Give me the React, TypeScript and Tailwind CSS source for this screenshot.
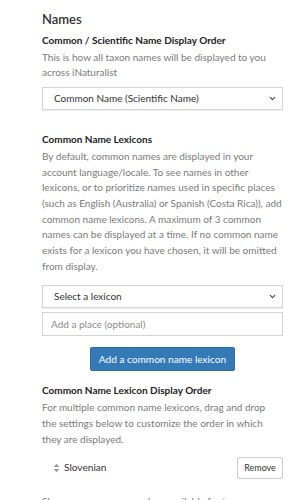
import { ChevronDown } from "lucide-react";

function FakeSelect({ label }: { label: string }) {
  return (
    <div className="flex h-[23px] items-center justify-between border border-[#d4d4d4] bg-white pl-[11px] pr-[5px] text-[10px] text-[#333] shadow-[0_1px_1px_rgba(0,0,0,0.06)]">
      <span>{label}</span>
      <ChevronDown className="h-[9px] w-[9px] text-[#444]" strokeWidth={3} />
    </div>
  );
}

function SortIcon() {
  return (
    <svg width="7" height="10" viewBox="0 0 7 10" className="text-[#9a9a9a]">
      <path d="M0.5 4 L3.5 0.8 L6.5 4 Z" fill="currentColor" />
      <path d="M0.5 6 L3.5 9.2 L6.5 6 Z" fill="currentColor" />
    </svg>
  );
}

export default function App() {
  return (
    <div className="min-h-[500px] w-[308px] bg-white pl-[42px] pr-[25px] pt-[9px] font-['Lato',sans-serif] text-[10px] leading-[15.7px] text-[#7a7a7a]">
      <h2 className="text-[13px] leading-[20px] font-semibold text-[#333]">Names</h2>

      {/* display order */}
      <h4 className="mt-[4px] font-bold text-[#222]">Common / Scientific Name Display Order</h4>
      <p className="mt-[1px]">This is how all taxon names will be displayed to you across iNaturalist</p>
      <div className="mt-[6px]">
        <FakeSelect label="Common Name (Scientific Name)" />
      </div>

      {/* lexicons */}
      <h4 className="mt-[22px] font-bold text-[#222]">Common Name Lexicons</h4>
      <p className="mt-[1px]">
        By default, common names are displayed in your account language/locale. To see names in other
        lexicons, or to prioritize names used in specific places (such as English (Australia) or Spanish
        (Costa Rica)), add common name lexicons. A maximum of 3 common names can be displayed at a time.
        If no common name exists for a lexicon you have chosen, it will be omitted from display.
      </p>
      <div className="mt-[11px]">
        <FakeSelect label="Select a lexicon" />
      </div>
      <input
        className="mt-[4px] block h-[24px] w-full border border-[#d4d4d4] px-[8px] text-[10px] text-[#333] placeholder:text-[#8a8a8a] outline-none"
        placeholder="Add a place (optional)"
      />
      <div className="mt-[11px] flex justify-center">
        <button className="h-[24px] w-[145px] rounded-[2px] border border-[#2e6da4] bg-[#337ab7] text-[10.1px] text-white">
          Add a common name lexicon
        </button>
      </div>

      {/* lexicon order */}
      <h4 className="mt-[12px] font-bold text-[#222]">Common Name Lexicon Display Order</h4>
      <p className="mt-[1px] pr-[6px]">
        For multiple common name lexicons, drag and drop the settings below to customize the order in
        which they are displayed.
      </p>
      <div className="mt-[10px] flex items-center justify-between">
        <div className="flex items-center gap-[4px] pl-[11px] text-[10.1px] text-[#333]">
          <SortIcon />
          <span>Slovenian</span>
        </div>
        <button className="h-[22px] w-[46px] rounded-[2px] border border-[#ccc] bg-white text-[9px] text-[#333]">
          Remove
        </button>
      </div>

      <p className="mt-[15px]">Show common names when available for taxa</p>
    </div>
  );
}
